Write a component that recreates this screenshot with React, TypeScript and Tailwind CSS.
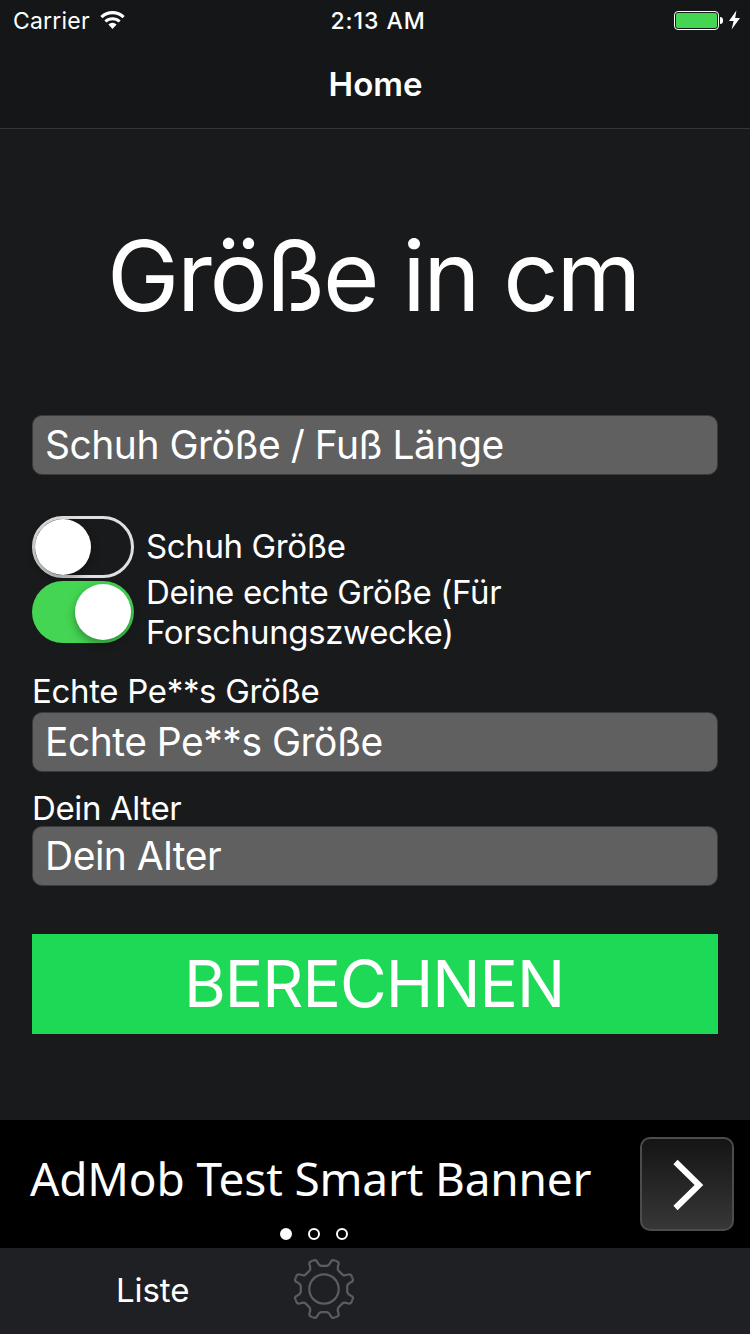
import React from "react";

const gearAngles = [0, 45, 90, 135, 180, 225, 270, 315];

function StatusBar() {
  return (
    <div className="flex h-10 items-center justify-between pl-[13px] pr-[10px]">
      <div className="flex w-[200px] items-center">
        <span className="pt-px text-[23px] leading-10 tracking-[0.2px]">Carrier</span>
        <svg className="ml-[10px]" width="26" height="20" viewBox="0 0 26 20" fill="none">
          <path d="M1.4 7.2A16 16 0 0 1 23.6 7.2" stroke="white" strokeWidth="3.2" />
          <path d="M5.4 11.5A10.4 10.4 0 0 1 19.6 11.5" stroke="white" strokeWidth="3" />
          <path d="M8.4 14.4A6 6 0 0 1 16.6 14.4L12.5 19Z" fill="white" />
        </svg>
      </div>
      <span className="pl-[3px] pt-px text-[23px] font-medium leading-10 tracking-[0.95px]">2:13 AM</span>
      <div className="flex w-[200px] items-center justify-end">
        <div className="h-[19px] w-[45px] rounded-[4px] border border-white p-px">
          <div className="h-full w-full rounded-[2px] bg-[#44d553]" />
        </div>
        <div className="ml-px h-[7px] w-[3px] rounded-r-full bg-white" />
        <svg className="ml-[6px]" width="11" height="20" viewBox="0 0 11 20">
          <path d="M7.4 0.5L0 11H4.6L2.6 19.5L11 8H6.2Z" fill="white" />
        </svg>
      </div>
    </div>
  );
}

function Field({ text }: { text: string }) {
  return (
    <div className="flex h-[60px] items-center rounded-[10px] border border-[#3a3b3c] bg-[#606060] px-3">
      <span className="text-[39px] leading-[58px] tracking-[-0.5px]">{text}</span>
    </div>
  );
}

function Toggle({ on }: { on: boolean }) {
  return on ? (
    <div className="flex h-[62px] w-[102px] shrink-0 items-center justify-end rounded-full bg-[#44d553] pr-[3px]">
      <div className="h-14 w-14 rounded-full bg-white shadow-[0_4px_10px_rgba(0,0,0,0.35)]" />
    </div>
  ) : (
    <div className="flex h-[62px] w-[102px] shrink-0 items-center rounded-full border-[3px] border-[#e0e0e0]">
      <div className="h-14 w-14 rounded-full bg-white shadow-[0_4px_10px_rgba(0,0,0,0.35)]" />
    </div>
  );
}

function Gear() {
  return (
    <svg width="62" height="62" viewBox="-31 -31 62 62" fill="none" stroke="#5c5d5f" strokeWidth="2.2">
      <circle r="14.7" />
      {gearAngles.map((angle) => (
        <path
          key={angle}
          transform={`rotate(${angle})`}
          d="M-11.6 -28L-10 -28.8Q-8 -29.5 -7 -27.5C-5.8 -25 -5 -23.2 -2.5 -23.2H2.5C5 -23.2 5.8 -25 7 -27.5Q8 -29.5 10 -28.8L11.6 -28"
        />
      ))}
    </svg>
  );
}

export default function App() {
  return (
    <div className="flex h-[1334px] w-[750px] flex-col overflow-hidden whitespace-nowrap bg-[#191a1c] font-['Inter',sans-serif] text-white">
      <header className="h-[129px] border-b border-[#353638] bg-[#141617]">
        <StatusBar />
        <h1 className="pl-px text-center text-[33px] font-semibold leading-[88px]">Home</h1>
      </header>

      <main className="flex h-[991px] flex-col px-8 pt-[87px]">
        <h2 className="pr-[4px] text-center text-[97px] leading-[120px] tracking-[-2.3px]">Größe in cm</h2>
        <div className="mt-[79px]">
          <Field text="Schuh Größe / Fuß Länge" />
        </div>
        <div className="mt-[41px] flex h-[62px] items-center gap-3">
          <Toggle on={false} />
          <span className="pb-[2px] text-[33px] leading-10 tracking-[-0.38px]">Schuh Größe</span>
        </div>
        <div className="mt-[3px] flex h-[62px] items-center gap-3">
          <Toggle on />
          <span className="text-[33px] leading-10 tracking-[-0.36px]">
            Deine echte Größe (Für
            <br />
            Forschungszwecke)
          </span>
        </div>
        <label className="mt-[28px] text-[33px] leading-10 tracking-[-0.33px]">Echte Pe**s Größe</label>
        <div className="mt-px">
          <Field text="Echte Pe**s Größe" />
        </div>
        <label className="mt-[18px] text-[33px] leading-[36px] tracking-[-0.38px]">Dein Alter</label>
        <Field text="Dein Alter" />
        <button className="mt-[48px] h-[100px] bg-[#1ed955] pr-[2px] text-[64px] leading-[100px] tracking-[-1px]">BERECHNEN</button>
      </main>

      <section className="flex h-32 justify-between bg-black pl-[30px] pr-4">
        <div className="flex flex-col">
          <span className="mt-[26px] font-['Noto_Sans',sans-serif] text-[46px] leading-[64px] tracking-[-0.18px]">AdMob Test Smart Banner</span>
          <div className="ml-[250px] mt-[18px] flex gap-4">
            <i className="h-3 w-3 rounded-full border-2 border-white bg-white" />
            <i className="h-3 w-3 rounded-full border-2 border-white" />
            <i className="h-3 w-3 rounded-full border-2 border-white" />
          </div>
        </div>
        <div className="mt-[17px] h-[94px] w-[94px] rounded-[10px] border-2 border-[#4c4c4c] bg-linear-to-b from-[#151515] to-[#373737]">
          <svg width="90" height="90" viewBox="0 0 90 90" fill="none">
            <path d="M33.5 23L57 46L33.5 69" stroke="white" strokeWidth="6" />
          </svg>
        </div>
      </section>

      <footer className="flex h-[86px] bg-[#1f2024] pl-[116px]">
        <span className="w-[177px] text-[33px] leading-[84px] tracking-[-0.1px]">Liste</span>
        <div className="pt-[10px]">
          <Gear />
        </div>
      </footer>
    </div>
  );
}
